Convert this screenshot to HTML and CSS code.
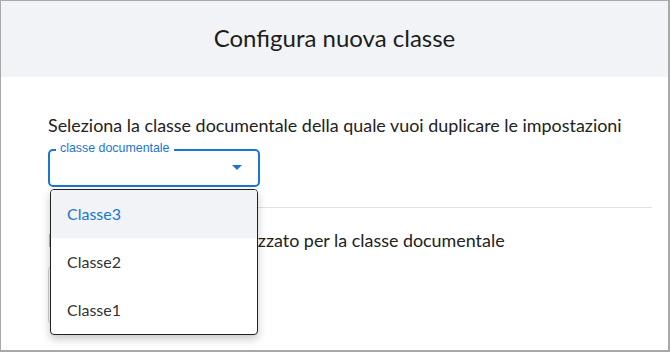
FILE: index.html
```html
<!DOCTYPE html>
<html lang="it">
<head>
  <meta charset="UTF-8" />
  <title>Configura nuova classe</title>
  <link rel="stylesheet" href="styles.css">
</head>
<body>
  <div class="dialog">
    <div class="dialog-header">
      <h2>Configura nuova classe</h2>
    </div>

    <div class="dialog-body">
      <p class="step-title">Seleziona la classe documentale della quale vuoi duplicare le impostazioni</p>

      <div class="select-wrap">
        <div class="select-field">
          <span class="select-label">classe documentale</span>
          <svg class="select-arrow" width="10" height="5" viewBox="0 0 10 5"><path d="M0 0h10L5 5z" fill="#1976d2"/></svg>
        </div>

        <ul class="select-menu">
          <li class="selected">Classe3</li>
          <li>Classe2</li>
          <li>Classe1</li>
        </ul>
      </div>

      <hr class="divider">

      <p class="step-title">Definisci il layout personalizzato per la classe documentale</p>
      <div class="ghost-input"></div>
    </div>
  </div>
</body>
</html>
```

FILE: styles.css
```css
:root {
  --primary-color: #1976d2;
  --header-bg: #f2f3f6;
  --frame-color: #a8a8a8;
  --text-color: #222222;
  --line-color: #e2e2e2;
}
html, body {
  margin: 0;
  height: 100%;
}
body {
  font-family: Lato, 'Liberation Sans', sans-serif;
  color: var(--text-color);
  background-color: #ffffff;
}
.dialog {
  box-sizing: border-box;
  width: 670px;
  height: 352px;
  border: 1px solid var(--frame-color);
  border-right-width: 2px;
  border-bottom-width: 2px;
  overflow: hidden;
}
.dialog-header {
  background-color: var(--header-bg);
  height: 76px;
  display: flex;
  align-items: center;
  justify-content: center;
}
.dialog-header h2 {
  margin: 0 0 4px;
  font-size: 24px;
  font-weight: 400;
  color: #1d1d1d;
}
.dialog-body {
  padding: 36px 16px 0 47px;
}
.step-title {
  margin: 0;
  font-size: 17.9px;
  line-height: 24px;
}
.select-wrap {
  position: relative;
  margin-top: 12px;
  width: 212px;
}
.select-field {
  box-sizing: border-box;
  height: 38px;
  border: 2px solid var(--primary-color);
  border-radius: 5px;
  position: relative;
}
.select-label {
  position: absolute;
  top: -10px;
  left: 6px;
  padding: 0 4px;
  background-color: #ffffff;
  font-family: 'Liberation Sans', Arial, sans-serif;
  font-size: 12.4px;
  line-height: 14px;
  color: var(--primary-color);
}
.select-arrow {
  position: absolute;
  right: 16px;
  top: 14px;
}
.select-menu {
  position: absolute;
  top: 40px;
  left: 2px;
  width: 208px;
  box-sizing: border-box;
  margin: 0;
  padding: 0;
  list-style: none;
  background-color: #ffffff;
  border: 1px solid #222222;
  border-radius: 4px;
  box-shadow: 0 4px 8px rgba(0,0,0,0.22);
  overflow: hidden;
  z-index: 2;
}
.select-menu li {
  height: 48px;
  line-height: 48px;
  padding-left: 16px;
  font-size: 16px;
  color: #333333;
}
.select-menu li.selected {
  background-color: var(--header-bg);
  color: var(--primary-color);
}
.divider {
  border: none;
  border-top: 1px solid var(--line-color);
  margin: 20px 0 20px 2px;
}
.ghost-input {
  margin-top: 14px;
  height: 56px;
  width: 200px;
  border: 1px solid #d0d0d0;
  border-radius: 4px;
}
```
